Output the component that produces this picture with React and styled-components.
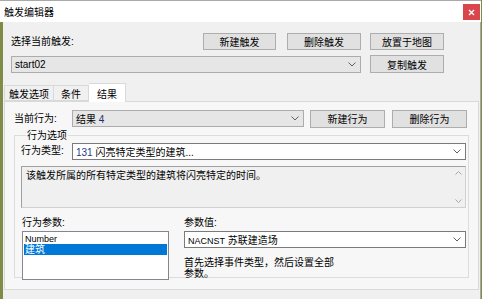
import React from 'react';
import styled, { createGlobalStyle } from 'styled-components';

const Global = createGlobalStyle`
  html, body { margin: 0; padding: 0; }
  body {
    width: 482px;
    height: 299px;
    overflow: hidden;
    background: #7f8c48;
    font-family: "Liberation Sans", "Noto Sans CJK SC", sans-serif;
    font-size: 10px;
    color: #000;
  }
  #root { height: 299px; }
  * { box-sizing: border-box; }
`;

const Window = styled.div`
  width: 481px;
  height: 299px;
  display: flex;
  flex-direction: column;
`;

const TitleBar = styled.div`
  height: 22px;
  flex: none;
  background: #fff;
  border-top: 1px solid #a9a9a9;
  display: flex;
  align-items: center;
  justify-content: space-between;
  padding: 0 1px 0 4px;
`;

const Title = styled.span`
  font-size: 10px;
  color: #000;
`;

const CloseButton = styled.div`
  width: 17px;
  height: 16px;
  margin-top: 1px;
  background: #d9464b;
  color: #fff;
  display: flex;
  align-items: center;
  justify-content: center;
`;

const Client = styled.div`
  flex: 1;
  margin-left: 3px;
  background: #f0f0f0;
  border-right: 1px solid #a8a8a8;
  display: flex;
  flex-direction: column;
`;

const Top = styled.div`
  padding: 11px 0 0 8px;
  display: flex;
  flex-direction: column;
  gap: 5px;
`;

const Row = styled.div`
  display: flex;
  align-items: center;
  gap: ${p => p.$gap || 0}px;
  height: ${p => p.$h || 17}px;
`;

const Label = styled.span`
  width: ${p => (p.$w ? p.$w + 'px' : 'auto')};
  flex: ${p => (p.$grow ? 1 : 'none')};
  white-space: nowrap;
  line-height: 12px;
`;

const Button = styled.div`
  width: ${p => p.$w}px;
  height: ${p => p.$h || 17}px;
  margin-left: ${p => p.$ml || 0}px;
  flex: none;
  background: #e1e1e1;
  border: 1px solid #adadad;
  display: flex;
  align-items: center;
  justify-content: center;
  white-space: nowrap;
`;

const Combo = styled.div`
  width: ${p => p.$w}px;
  height: 17px;
  margin-left: ${p => p.$ml || 0}px;
  flex: none;
  background: ${p => (p.$white ? '#fff' : '#e6e6e6')};
  border: 1px solid ${p => (p.$white ? '#7a7a7a' : '#acacac')};
  display: flex;
  align-items: center;
  padding: 0 4px 0 3px;
`;

const ComboText = styled.span`
  flex: 1;
  white-space: nowrap;
  overflow: hidden;
`;

const Num = styled.span`
  color: ${p => p.$c || '#000'};
`;

const Latin = styled.span`
  font-size: 9px;
`;

const Chevron = () => (
  <svg width="8" height="5" viewBox="0 0 8 5" style={{ flex: 'none' }}>
    <polyline points="0.5,0.5 4,4 7.5,0.5" fill="none" stroke="#606060" strokeWidth="1" />
  </svg>
);

const Tabs = styled.div`
  margin: 9px 0 0 1px;
  display: flex;
  flex-direction: column;
`;

const TabStrip = styled.div`
  display: flex;
  align-items: flex-end;
  height: 19px;
  position: relative;
  z-index: 1;
`;

const Tab = styled.div`
  width: ${p => p.$w}px;
  height: ${p => (p.$active ? 19 : 16)}px;
  margin-bottom: ${p => (p.$active ? -1 : 0)}px;
  background: ${p => (p.$active ? '#fff' : '#f0f0f0')};
  border: 1px solid #d9d9d9;
  border-bottom: ${p => (p.$active ? 'none' : '1px solid #d9d9d9')};
  border-left: ${p => (p.$noLeft ? 'none' : '1px solid #d9d9d9')};
  display: flex;
  align-items: center;
  justify-content: center;
  white-space: nowrap;
`;

const Panel = styled.div`
  width: 475px;
  height: 189px;
  background: #f7f7f7;
  border: 1px solid #d9d9d9;
  padding: 7px 0 0 9px;
  display: flex;
  flex-direction: column;
`;

const GroupBox = styled.fieldset`
  margin: 1px 0 0 0;
  width: 455px;
  height: 149px;
  border: 1px solid #dcdcdc;
  padding: 0 0 0 6px;
  display: flex;
  flex-direction: column;
`;

const Legend = styled.legend`
  padding: 0 1px;
  margin-left: 5px;
  line-height: 13px;
`;

const TextArea = styled.div`
  margin-top: 6px;
  width: 445px;
  height: 42px;
  background: #f0f0f0;
  border: 1px solid #a0a0a0;
  border-right-color: #d0d0d0;
  border-bottom-color: #d0d0d0;
  display: flex;
  padding: 3px 0 0 4px;
`;

const AreaText = styled.div`
  flex: 1;
  line-height: 12px;
`;

const ScrollBar = styled.div`
  width: 14px;
  display: flex;
  flex-direction: column;
  justify-content: space-between;
  align-items: center;
  padding: 4px 0 4px;
  margin-top: -3px;
`;

const Params = styled.div`
  margin-top: 9px;
  display: grid;
  grid-template-columns: 147px 282px;
  column-gap: 15px;
  padding-left: 1px;
`;

const Col = styled.div`
  display: flex;
  flex-direction: column;
  gap: 2px;
`;

const ListBox = styled.div`
  width: 147px;
  height: 49px;
  background: #fff;
  border: 1px solid #828790;
  padding: 1px 0 0 1px;
  display: flex;
  flex-direction: column;
`;

const ListItem = styled.div`
  height: 11px;
  line-height: 11px;
  margin-right: 1px;
  padding-left: 1px;
  background: ${p => (p.$sel ? '#0078d7' : 'transparent')};
  color: ${p => (p.$sel ? '#fff' : '#000')};
`;

const Help = styled.div`
  margin-top: 7px;
  width: 152px;
  line-height: 11px;
`;

const Arrow = ({ up }) => (
  <svg width="7" height="4" viewBox="0 0 7 4">
    <polyline
      points={up ? '0.5,3.5 3.5,0.5 6.5,3.5' : '0.5,0.5 3.5,3.5 6.5,0.5'}
      fill="none"
      stroke="#a6a6a6"
      strokeWidth="1"
    />
  </svg>
);

export default function App() {
  return (
    <>
      <Global />
      <Window>
        <TitleBar>
          <Title>触发编辑器</Title>
          <CloseButton>
            <svg width="7" height="7" viewBox="0 0 7 7">
              <path d="M1 1L6 6M6 1L1 6" stroke="#fff" strokeWidth="1.3" />
            </svg>
          </CloseButton>
        </TitleBar>
        <Client>
          <Top>
            <Row>
              <Label $grow>选择当前触发:</Label>
              <Button $w={73}>新建触发</Button>
              <Button $w={74} $ml={11}>删除触发</Button>
              <Button $w={74} $ml={9}>放置于地图</Button>
              <Label $w={36} />
            </Row>
            <Row $h={18}>
              <Combo $w={350}>
                <ComboText>start02</ComboText>
                <Chevron />
              </Combo>
              <Button $w={74} $ml={9} $h={18}>复制触发</Button>
            </Row>
          </Top>
          <Tabs>
            <TabStrip>
              <Tab $w={50}>触发选项</Tab>
              <Tab $w={35} $noLeft>条件</Tab>
              <Tab $w={37} $active $noLeft>结果</Tab>
            </TabStrip>
            <Panel>
              <Row $h={19}>
                <Label $w={58}>当前行为:</Label>
                <Combo $w={232}>
                  <ComboText>结果 <Num $c="#1c2f6e">4</Num></ComboText>
                  <Chevron />
                </Combo>
                <Button $w={75} $ml={6} $h={18}>新建行为</Button>
                <Button $w={75} $ml={7} $h={18}>删除行为</Button>
              </Row>
              <GroupBox>
                <Legend>行为选项</Legend>
                <Row $h={18}>
                  <Label $w={51}>行为类型:</Label>
                  <Combo $w={394} $white>
                    <ComboText><Num $c="#1c3a8c">131</Num> 闪亮特定类型的建筑...</ComboText>
                    <Chevron />
                  </Combo>
                </Row>
                <TextArea>
                  <AreaText>该触发所属的所有特定类型的建筑将闪亮特定的时间。</AreaText>
                  <ScrollBar>
                    <Arrow up />
                    <Arrow />
                  </ScrollBar>
                </TextArea>
                <Params>
                  <Col>
                    <Label>行为参数:</Label>
                    <ListBox>
                      <ListItem><Latin>Number</Latin></ListItem>
                      <ListItem $sel>建筑</ListItem>
                    </ListBox>
                  </Col>
                  <Col>
                    <Label>参数值:</Label>
                    <Combo $w={282} $white>
                      <ComboText><Latin>NACNST</Latin> 苏联建造场</ComboText>
                      <Chevron />
                    </Combo>
                    <Help>首先选择事件类型，然后设置全部参数。</Help>
                  </Col>
                </Params>
              </GroupBox>
            </Panel>
          </Tabs>
        </Client>
      </Window>
    </>
  );
}
